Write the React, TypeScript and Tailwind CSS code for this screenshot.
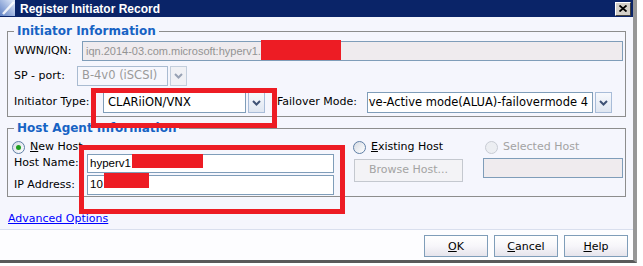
import React from 'react'

const Chevron = ({ dim }: { dim?: boolean }) => (
  <svg width="9" height="6" viewBox="0 0 9 6">
    <path d="M1 1 L4.5 4.5 L8 1" fill="none" stroke={dim ? '#98a2b4' : '#3f5275'} strokeWidth="2" />
  </svg>
)

function Select({ text, w, dim, end }: { text: string; w: string; dim?: boolean; end?: boolean }) {
  return (
    <div className={`flex h-full ${w}`}>
      <div
        className={`flex-1 min-w-0 flex items-center overflow-hidden whitespace-nowrap px-[4px] text-[11.5px] border ${
          dim ? 'border-[#a9bbd1] bg-[#f6f7fd] text-[#9a9a9a]' : 'border-[#7f9db9] bg-white text-black'
        } ${end ? 'justify-end' : ''}`}
      >
        <span className="shrink-0">{text}</span>
      </div>
      <div
        className={`ml-[2px] w-[17px] flex items-center justify-center border ${
          dim ? 'border-[#c3cedc] bg-[#f0f1f5]' : 'border-[#a8bcd8] bg-gradient-to-b from-[#f7f9fd] to-[#dfe6f1]'
        }`}
      >
        <Chevron dim={dim} />
      </div>
    </div>
  )
}

function Radio({ checked, disabled }: { checked?: boolean; disabled?: boolean }) {
  return (
    <span
      className={`w-[13px] h-[13px] rounded-full border flex items-center justify-center shrink-0 ${
        disabled ? 'border-[#c8ccd4] bg-[#eceef2]' : 'border-[#5f7fa6] bg-gradient-to-br from-[#d6dbe3] to-white'
      }`}
    >
      {checked && <span className="w-[5px] h-[5px] rounded-full bg-[#1f9f1f]" />}
    </span>
  )
}

function Button({ children }: { children: React.ReactNode }) {
  return (
    <button className="w-[64px] h-[22px] border border-[#7f9db9] bg-gradient-to-b from-white via-[#f7f6fa] to-[#e6e4ec] text-black text-[11px] leading-none">
      {children}
    </button>
  )
}

export default function App() {
  return (
    <div className="relative w-[643px] h-[266px] bg-white overflow-hidden font-['DejaVu_Sans',sans-serif] text-[11px] text-black">
      <div className="w-[637px] h-[263px] flex flex-col border-r-[4px] border-b-[3px] border-r-[#979797] border-b-[#5a5a5a]">
        {/* title bar */}
        <div className="h-[17px] bg-[#0a2468] flex items-center pr-[2px]">
          <svg width="16" height="17" viewBox="0 0 16 17" className="shrink-0">
            <defs>
              <linearGradient id="ic" x1="0" y1="1" x2="1" y2="0">
                <stop offset="0" stopColor="#5d7fc4" />
                <stop offset="1" stopColor="#e6eefc" />
              </linearGradient>
            </defs>
            <rect x="0" y="0" width="15" height="16" fill="url(#ic)" />
            <path d="M3 14 L14 2" stroke="#ffffff" strokeWidth="2.5" opacity="0.85" />
          </svg>
          <span className="ml-[4px] font-['Liberation_Sans',sans-serif] font-bold text-[12px] text-white leading-none">
            Register Initiator Record
          </span>
          <div className="ml-auto w-[16px] h-[14px] bg-[#d4d0c8] border border-t-white border-l-white border-r-[#404040] border-b-[#404040] flex items-center justify-center">
            <svg width="8" height="7" viewBox="0 0 8 7">
              <path d="M0.5 0.5 L7.5 6.5 M7.5 0.5 L0.5 6.5" stroke="#000" strokeWidth="1.8" />
            </svg>
          </div>
        </div>

        {/* body */}
        <div className="flex-1 bg-[#f5f6fd] flex flex-col">
          <fieldset className="mx-[7px] mt-[7px] border border-[#8d8d8d] pl-[6px] pr-[2px] pb-[3px]">
            <legend className="px-[3px] text-[12px] leading-[14px] font-bold text-[#1763c4]">Initiator Information</legend>
            <div className="pt-[3px] flex flex-col">
              <div className="flex items-center h-[20px]">
                <span className="w-[68px]">WWN/IQN:</span>
                <div className="w-[541px] h-full border border-[#7f9db9] bg-[#efebee] text-[#939393] flex items-center px-[3px] font-['Liberation_Sans',sans-serif] text-[11px]">
                  iqn.2014-03.com.microsoft:hyperv1.
                </div>
              </div>
              <div className="flex items-center h-[20px] mt-[5px]">
                <span className="w-[63px]">SP - port:</span>
                <Select text="B-4v0 (iSCSI)" w="w-[110px]" dim />
              </div>
              <div className="flex items-center h-[21px] mt-[6px]">
                <span className="w-[89px]">Initiator Type:</span>
                <Select text="CLARiiON/VNX" w="w-[162px]" />
                <span className="ml-[12px] w-[90px]">Failover Mode:</span>
                <Select text="ve-Active mode(ALUA)-failovermode 4" w="w-[245px]" end />
              </div>
            </div>
          </fieldset>

          <fieldset className="mx-[7px] mt-[4px] border border-[#8d8d8d] pl-[6px] pr-[2px] pb-[1px]">
            <legend className="px-[3px] text-[12px] leading-[14px] font-bold text-[#1763c4]">Host Agent Information</legend>
            <div className="pt-[5px] flex">
              <div className="w-[339px] flex flex-col">
                <label className="flex items-center gap-[5px] h-[14px] -ml-[2px]">
                  <Radio checked />
                  <span>
                    <span className="underline">N</span>ew Host
                  </span>
                </label>
                <div className="flex items-center h-[19px]">
                  <span className="w-[73px]">Host Name:</span>
                  <div className="w-[247px] h-full border border-[#7f9db9] bg-white flex items-center px-[2px] font-['Liberation_Sans',sans-serif] text-[11.5px]">
                    hyperv1
                  </div>
                </div>
                <div className="flex items-center h-[20px] mt-[2px]">
                  <span className="w-[73px]">IP Address:</span>
                  <div className="w-[247px] h-full border border-[#7f9db9] bg-white flex items-center px-[2px] font-['Liberation_Sans',sans-serif] text-[11.5px]">
                    10<span className="ml-[42px]">.</span>
                  </div>
                </div>
              </div>
              <div className="w-[130px] flex flex-col">
                <label className="flex items-center gap-[5px] h-[14px]">
                  <Radio />
                  <span>
                    <span className="underline">E</span>xisting Host
                  </span>
                </label>
                <button className="mt-[5px] ml-[1px] w-[109px] h-[23px] border border-[#c4c8cf] bg-[#f3f3f6] text-[#a3a3a3] text-[11px]">
                  Browse Host...
                </button>
              </div>
              <div className="w-[140px] flex flex-col">
                <label className="flex items-center gap-[5px] h-[14px] ml-[2px] text-[#a3a3a3]">
                  <Radio disabled />
                  <span>Selected Host</span>
                </label>
                <div className="mt-[4px] h-[20px] w-[140px] border border-[#7f9db9] bg-[#efebee]" />
              </div>
            </div>
          </fieldset>

          <a href="#" className="ml-[8px] mt-[15px] leading-[13px] w-fit text-[#0000ff] underline">
            Advanced Options
          </a>
        </div>

        {/* footer */}
        <div className="h-[31px] border-t border-[#d9dfee] bg-[#fdfdff] flex justify-end items-start pt-[5px] pr-[5px] gap-[6px]">
          <Button>
            <span className="underline">O</span>K
          </Button>
          <Button>
            <span className="underline">C</span>ancel
          </Button>
          <Button>
            <span className="underline">H</span>elp
          </Button>
        </div>
      </div>

      {/* redactions */}
      <div className="absolute left-[261px] top-[40px] w-[80px] h-[20px] bg-[#ed1c24]" />
      <div className="absolute left-[132px] top-[154px] w-[71px] h-[14px] bg-[#ed1c24]" />
      <div className="absolute left-[104px] top-[173px] w-[45px] h-[15px] bg-[#ed1c24]" />

      {/* annotation boxes */}
      <div className="absolute left-[91px] top-[88px] w-[186px] h-[40px] border-[5px] border-[#ed1c24]" />
      <div className="absolute left-[79px] top-[145px] w-[266px] h-[69px] border-[5px] border-[#ed1c24]" />
    </div>
  )
}
